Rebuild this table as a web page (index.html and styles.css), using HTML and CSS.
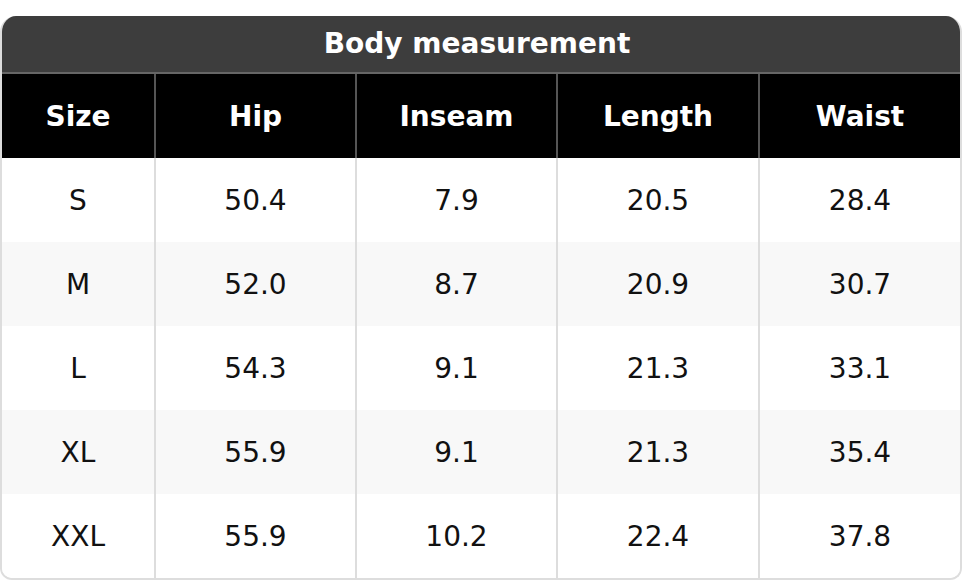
FILE: index.html
```html
<!DOCTYPE html>
<html>
<head>
<meta charset="utf-8">
<link rel="stylesheet" href="styles.css">
</head>
<body>
<div class="wrap">
  <div class="title">Body measurement</div>
  <table class="sizes">
    <colgroup>
      <col class="c1"><col class="c2"><col class="c3"><col class="c4"><col class="c5">
    </colgroup>
    <thead>
      <tr><th>Size</th><th>Hip</th><th>Inseam</th><th>Length</th><th>Waist</th></tr>
    </thead>
    <tbody>
      <tr><td>S</td><td>50.4</td><td>7.9</td><td>20.5</td><td>28.4</td></tr>
      <tr><td>M</td><td>52.0</td><td>8.7</td><td>20.9</td><td>30.7</td></tr>
      <tr><td>L</td><td>54.3</td><td>9.1</td><td>21.3</td><td>33.1</td></tr>
      <tr><td>XL</td><td>55.9</td><td>9.1</td><td>21.3</td><td>35.4</td></tr>
      <tr><td>XXL</td><td>55.9</td><td>10.2</td><td>22.4</td><td>37.8</td></tr>
    </tbody>
  </table>
</div>
</body>
</html>
```

FILE: styles.css
```css
html, body {
  margin: 0;
  padding: 0;
  background: #ffffff;
}
body {
  padding-top: 16px;
  font-family: "DejaVu Sans", "Liberation Sans", sans-serif;
  font-size: 28px;
}
.wrap {
  width: 962px;
  box-sizing: border-box;
  border: 2px solid #dddddd;
  border-top: none;
  border-radius: 16px 16px 12px 12px;
  overflow: hidden;
}
.title {
  height: 58px;
  box-sizing: border-box;
  background: #3d3d3d;
  color: #ffffff;
  font-weight: bold;
  display: flex;
  align-items: center;
  justify-content: center;
  padding-right: 8px;
  padding-bottom: 1px;
  border-bottom: 2px solid #666666;
  margin: 0 -2px;
}
.sizes {
  width: 958px;
  table-layout: fixed;
  border-collapse: separate;
  border-spacing: 0;
}
.c1 { width: 152px; }
.c2 { width: 201px; }
.c3 { width: 201px; }
.c4 { width: 202px; }
.c5 { width: 202px; }
.sizes th,
.sizes td {
  height: 84px;
  padding: 0;
  text-align: center;
  vertical-align: middle;
  box-sizing: border-box;
}
.sizes th {
  background: #000000;
  color: #ffffff;
  font-weight: bold;
}
.sizes th + th {
  border-left: 2px solid #555555;
}
.sizes td {
  color: #111111;
  background: #ffffff;
}
.sizes td + td {
  border-left: 2px solid #dddddd;
}
.sizes tbody tr:nth-child(even) td {
  background: #f8f8f8;
}
```
